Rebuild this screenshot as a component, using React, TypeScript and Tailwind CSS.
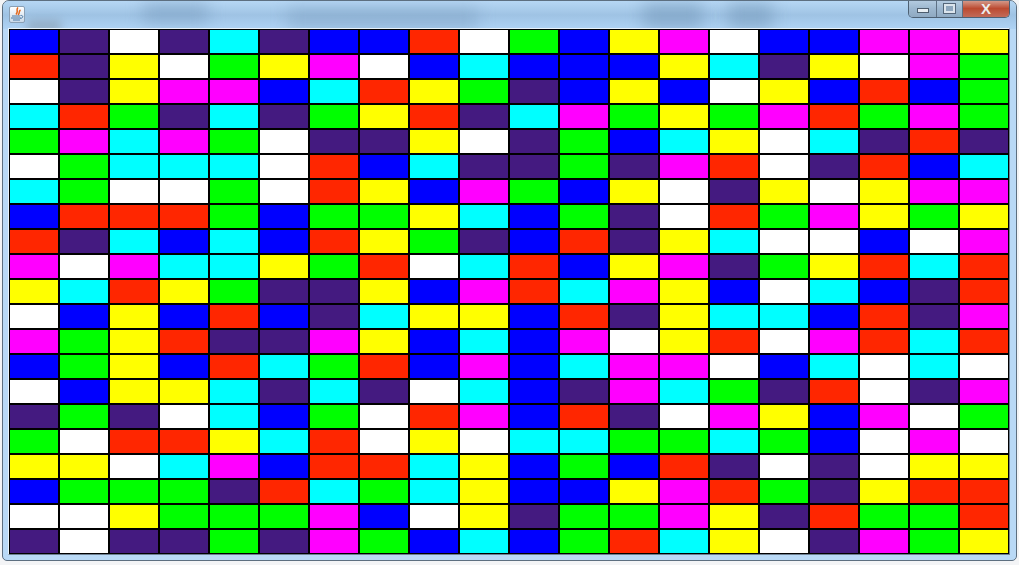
const rows = [
  "BPWPCPBBRWGBYMWBBMMY",
  "RPYWGYMWBCBBBYCPYWMG",
  "WPYMMBCRYGPBYBWYBRBG",
  "CRGPCPGYRPCMGYGMRGMG",
  "GMCMGWPPYWPGBCYWCPRP",
  "WGCCCWRBCPPGPMRWPRBC",
  "CGWWGWRYBMGBYWPYWYMM",
  "BRRRGBGGYCBGPWRGMYGY",
  "RPCBCBRYGPBRPYCWWBWM",
  "MWMCCYGRWCRBYMPGYRCR",
  "YCRYGPPYBMRCMYBWCBPR",
  "WBYBRBPCYYBRPYCCBRPM",
  "MGYRPPMYBCBMWYRWMRCR",
  "BGYBRCGRBMBCMMWBCWCW",
  "WBYYCPCPWCBPMCGPRWPM",
  "PGPWCBGWRMBRPWMYBMWG",
  "GWRRYCRWYWCCGGCGBWMW",
  "YYWCMBRRCYBGBRPWPWYY",
  "BGGGPRCGCYBBYMRGPYRR",
  "WWYGGGMBWYPGGMYPRGGR",
  "PWPPGPMGBCBGRCYWPMGY",
];

const colors: Record<string, string> = {
  B: "bg-[#0000ff]",
  P: "bg-[#441a80]",
  W: "bg-white",
  C: "bg-[#00ffff]",
  R: "bg-[#ff2600]",
  Y: "bg-[#ffff00]",
  G: "bg-[#00ff00]",
  M: "bg-[#ff00ff]",
};

function JavaIcon() {
  return (
    <svg width="14" height="15" viewBox="0 0 14 15">
      <path d="M8 0.500C5.500 3 9 4 6 7.500M10.500 3C8 4.500 10.500 6 8 8" fill="none" stroke="#e2661a" strokeWidth="1.500" />
      <path d="M2 9H10M1 11H11M3 13H10" fill="none" stroke="#4a78a5" strokeWidth="1.100" />
      <path d="M10.500 8.500C13.500 8 13.500 11 10.500 11.500" fill="none" stroke="#4a78a5" strokeWidth="1" />
    </svg>
  );
}

export default function App() {
  return (
    <div className="w-[1019px] h-[565px] bg-[#f3f4f6] overflow-hidden">
      <div className="relative ml-[2px] w-[1015px] h-[561px] flex flex-col border border-[#5d6f80] rounded-t-[7px] rounded-b-[5px] overflow-hidden bg-[#b9d9f6]">
        <div className="absolute left-0 right-0 top-0 h-[28px] bg-gradient-to-b from-[#b6d7f4] via-[#9fc3e4] to-[#aed2f4]" />
        <div className="absolute left-[24px] top-[19px] w-[34px] h-[14px] bg-[#7d8f9f]/50 blur-[5px]" />
        <div className="absolute left-[140px] top-[2px] w-[65px] h-[20px] bg-[#6f93b5]/45 blur-[8px]" />
        <div className="absolute left-[285px] top-[6px] w-[190px] h-[24px] bg-[#6f93b5]/35 blur-[8px]" />
        <div className="absolute left-[640px] top-[2px] w-[60px] h-[26px] bg-[#6f93b5]/50 blur-[8px]" />
        <div className="absolute left-[725px] top-[2px] w-[45px] h-[26px] bg-[#6f93b5]/50 blur-[8px]" />
        <div className="relative h-[27px] flex justify-between items-start pl-[6px] pr-[6px]">
          <div className="mt-[5px] w-[16px] h-[17px] flex items-center justify-center rounded-[2px] border border-[#8aa0b5] bg-gradient-to-b from-white to-[#c9d9e8]">
            <JavaIcon />
          </div>
          <div className="flex h-[18px] -mt-[1px] border border-t-0 border-[#4d6073] rounded-b-[5px] overflow-hidden">
            <div className="w-[28px] flex items-center justify-center border-r border-[#5d7084] bg-gradient-to-b from-[#b6cde2] via-[#9db7cf] to-[#8fa9c2]">
              <div className="mt-[4px] w-[12px] h-[5px] bg-[#e8eef3] border border-[#4d5d6e]" />
            </div>
            <div className="w-[26px] flex items-center justify-center border-r border-[#5d7084] bg-gradient-to-b from-[#b6cde2] via-[#9db7cf] to-[#8fa9c2]">
              <div className="w-[11px] h-[9px] bg-[#8ea6bd] border-2 border-[#dbe4ec] outline outline-1 outline-[#55677a]" />
            </div>
            <div className="w-[46px] flex items-center justify-center bg-gradient-to-b from-[#d5a193] via-[#bb4a30] to-[#c26a58]">
              <span className="font-['Liberation_Sans',sans-serif] font-bold text-[15px] leading-none text-[#ececec]">X</span>
            </div>
          </div>
        </div>
        <div className="relative ml-[5px] w-[1002px] border border-t-[#e8f2fb] border-l-[#e8f2fb] border-r-[#6f8193] border-b-[#6f8193]">
          <div className="grid grid-cols-[repeat(20,50px)] auto-rows-[25px]">
            {rows.map((row, r) =>
              row.split("").map((c, i) => (
                <div key={`${r}-${i}`} className={`border border-black ${colors[c]}`} />
              )),
            )}
          </div>
        </div>
      </div>
    </div>
  );
}
